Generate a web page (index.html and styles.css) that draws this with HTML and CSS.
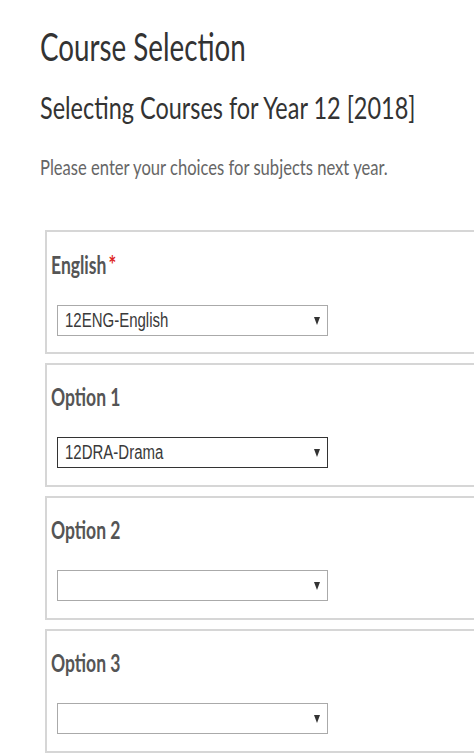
FILE: index.html
```html
<!DOCTYPE html>
<html lang="en">
<head>
    <meta charset="UTF-8">
    <meta name="viewport" content="width=device-width, initial-scale=1.0">
    <title>Course Selection</title>
    <link rel="stylesheet" href="styles.css">
</head>
<body>
    <div class="page">
        <h1><span class="sq">Course Selection</span></h1>
        <h2><span class="sq">Selecting Courses for Year 12 [2018]</span></h2>
        <p class="intro"><span class="sq">Please enter your choices for subjects next year.</span></p>

        <div class="field">
            <label><span class="sq">English<span class="req">*</span></span></label>
            <div class="select"><span class="sq">12ENG-English</span><i class="arrow"></i></div>
        </div>

        <div class="field">
            <label><span class="sq">Option 1</span></label>
            <div class="select active"><span class="sq">12DRA-Drama</span><i class="arrow"></i></div>
        </div>

        <div class="field">
            <label><span class="sq">Option 2</span></label>
            <div class="select"><span class="sq"></span><i class="arrow"></i></div>
        </div>

        <div class="field">
            <label><span class="sq">Option 3</span></label>
            <div class="select"><span class="sq"></span><i class="arrow"></i></div>
        </div>
    </div>
</body>
</html>
```

FILE: styles.css
```css
html, body {
    overflow-x: hidden;
}
body {
    margin: 0;
    background: #fff;
    color: #333;
    font-family: Lato, "Open Sans", sans-serif;
}
/* the original text is very narrow, squeeze it horizontally */
.sq {
    display: inline-block;
    transform: scaleX(0.73);
    transform-origin: 0 0;
    white-space: nowrap;
}
.page {
    padding: 22px 0 0 40px;
}
h1 {
    margin: 0;
    font-size: 39px;
    font-weight: normal;
    line-height: 48px;
}
h1 .sq {
    transform: scaleX(0.712);
}
h2 {
    margin: 18px 0 0;
    font-size: 31px;
    font-weight: normal;
    line-height: 38px;
}
h2 .sq {
    transform: scaleX(0.757);
}
.intro {
    margin: 29px 0 51px;
    font-size: 21px;
    line-height: 24px;
    color: #666;
}
.intro .sq {
    transform: scaleX(0.79);
}
.field {
    box-sizing: border-box;
    width: 450px;
    height: 124px;
    margin: 0 0 9px 5px;
    border: 2px solid #d6d6d6;
    padding: 0 0 0 4px;
}
.field label {
    display: block;
    margin-top: 17px;
    font-size: 24px;
    font-weight: bold;
    color: #555;
    line-height: 30px;
}
.req {
    margin-left: 3px;
    color: #d22;
    font-size: 25px;
}
.select {
    box-sizing: border-box;
    display: flex;
    align-items: center;
    justify-content: space-between;
    width: 271px;
    height: 31px;
    margin: 25px 0 0 6px;
    padding: 0 7px 0 7px;
    border: 1px solid #aaa;
    font-family: "Liberation Sans", Arial, sans-serif;
    font-size: 20px;
    color: #3a3a3a;
}
.select .sq {
    transform: scaleX(0.75);
    transform-origin: 0 50%;
}
.select.active {
    border-color: #333;
}
.arrow {
    width: 0;
    height: 0;
    border-left: 3px solid transparent;
    border-right: 3px solid transparent;
    border-top: 8px solid #333;
}
```
